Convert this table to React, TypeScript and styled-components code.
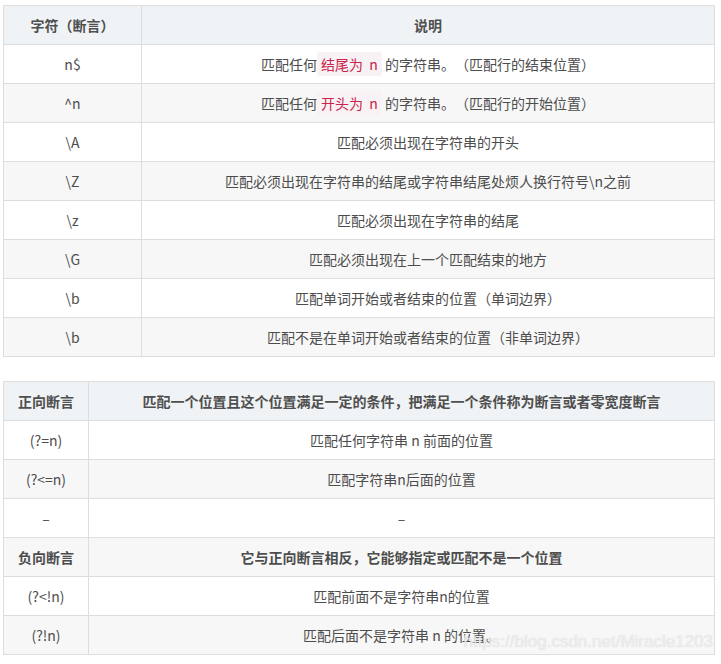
import React from "react";
import styled, { createGlobalStyle } from "styled-components";

const Global = createGlobalStyle`
  html, body { margin: 0; padding: 0; background: #fff; }
  body {
    font-family: "Microsoft YaHei", "Noto Sans CJK SC", "Liberation Sans", sans-serif;
    color: #4d4d4d;
    text-spacing-trim: space-all;
  }
`;

const Page = styled.div`
  position: relative;
  width: 721px;
  height: 664px;
  padding: 5px 6px 0 3px;
  box-sizing: border-box;
  display: flex;
  flex-direction: column;
  gap: 24px;
`;

const Table = styled.table`
  width: 712px;
  border-collapse: collapse;
  table-layout: fixed;
  font-size: 14px;
`;

const Th = styled.th<{ $w?: number }>`
  ${(p) => (p.$w ? `width: ${p.$w}px;` : "")}
  background: #eff3f5;
  border: 1px solid #dddddd;
  height: 39px;
  padding: 0 8px;
  box-sizing: border-box;
  font-weight: bold;
  color: #4f4f4f;
  text-align: center;
  line-height: 22px;
`;

const Tr = styled.tr<{ $alt?: boolean }>`
  background: ${(p) => (p.$alt ? "#f7f7f7" : "#ffffff")};
`;

const Td = styled.td<{ $bold?: boolean }>`
  border: 1px solid #dddddd;
  height: 39px;
  padding: 0 8px;
  box-sizing: border-box;
  text-align: center;
  line-height: 22px;
  color: #4d4d4d;
  font-weight: ${(p) => (p.$bold ? "bold" : "normal")};
`;

const Code = styled.code`
  font-family: "Microsoft YaHei", "Noto Sans CJK SC", "Liberation Sans", sans-serif;
  font-size: 14px;
  background: #f9f2f4;
  color: #c7254e;
  border-radius: 2px;
  padding: 2px 4px;
  white-space: pre;
`;

const Watermark = styled.div`
  position: absolute;
  right: 8px;
  top: 632px;
  font-family: "Liberation Sans", Arial, sans-serif;
  font-size: 17px;
  color: rgba(238, 238, 238, 0.95);
  text-shadow: 0 0 1px rgba(140, 140, 140, 0.3);
  pointer-events: none;
`;

const rows1: [string, React.ReactNode][] = [
  ["n$", <>匹配任何<Code>结尾为  n</Code> 的字符串。（匹配行的结束位置）</>],
  ["^n", <>匹配任何<Code>开头为  n</Code> 的字符串。（匹配行的开始位置）</>],
  ["\\A", "匹配必须出现在字符串的开头"],
  ["\\Z", "匹配必须出现在字符串的结尾或字符串结尾处烦人换行符号\\n之前"],
  ["\\z", "匹配必须出现在字符串的结尾"],
  ["\\G", "匹配必须出现在上一个匹配结束的地方"],
  ["\\b", "匹配单词开始或者结束的位置（单词边界）"],
  ["\\b", "匹配不是在单词开始或者结束的位置（非单词边界）"],
];

type Row2 = { a: string; b: string; head?: boolean };
const rows2: Row2[] = [
  { a: "(?=n)", b: "匹配任何字符串 n 前面的位置" },
  { a: "(?<=n)", b: "匹配字符串n后面的位置" },
  { a: "–", b: "–" },
  { a: "负向断言", b: "它与正向断言相反，它能够指定或匹配不是一个位置", head: true },
  { a: "(?<!n)", b: "匹配前面不是字符串n的位置" },
  { a: "(?!n)", b: "匹配后面不是字符串 n 的位置。" },
];

export default function App() {
  return (
    <>
      <Global />
      <Page>
        <Table>
          <thead>
            <tr>
              <Th $w={138}>字符（断言）</Th>
              <Th>说明</Th>
            </tr>
          </thead>
          <tbody>
            {rows1.map(([a, b], i) => (
              <Tr key={i} $alt={i % 2 === 1}>
                <Td>{a}</Td>
                <Td>{b}</Td>
              </Tr>
            ))}
          </tbody>
        </Table>
        <Table>
          <thead>
            <tr>
              <Th $w={85}>正向断言</Th>
              <Th>匹配一个位置且这个位置满足一定的条件，把满足一个条件称为断言或者零宽度断言</Th>
            </tr>
          </thead>
          <tbody>
            {rows2.map((r, i) => (
              <Tr key={i} $alt={i % 2 === 1}>
                <Td $bold={r.head}>{r.a}</Td>
                <Td $bold={r.head}>{r.b}</Td>
              </Tr>
            ))}
          </tbody>
        </Table>
        <Watermark>https://blog.csdn.net/Miracle1203</Watermark>
      </Page>
    </>
  );
}
